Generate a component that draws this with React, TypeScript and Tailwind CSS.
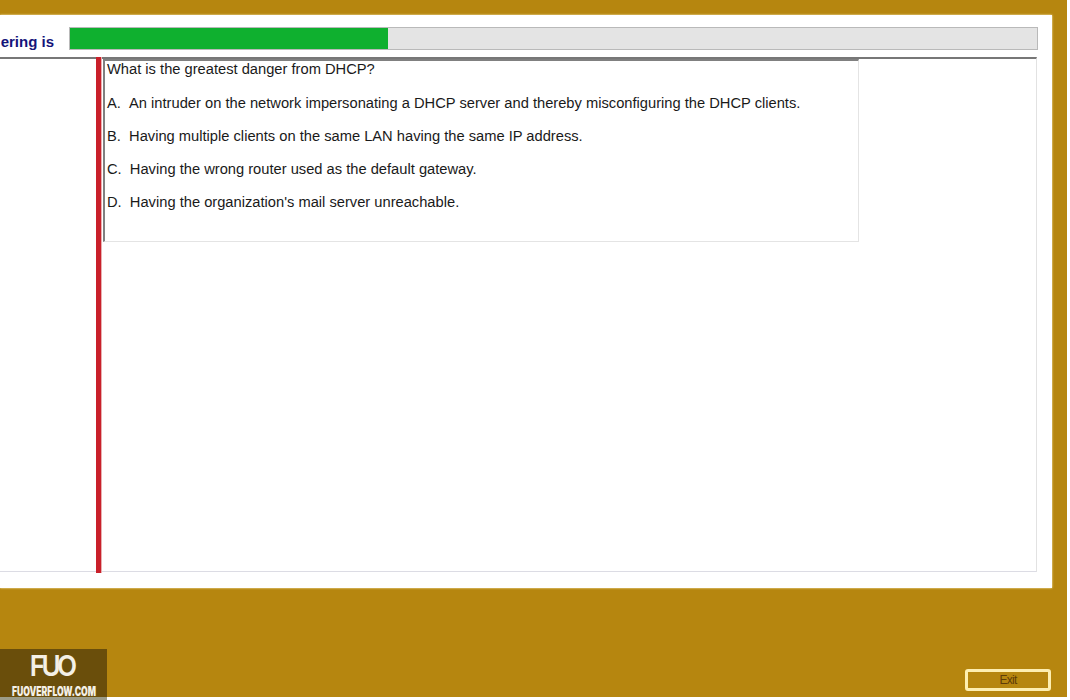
export default function App() {
  const answers = [
    "A.\u00a0\u00a0An intruder on the network impersonating a DHCP server and thereby misconfiguring the DHCP clients.",
    "B.\u00a0\u00a0Having multiple clients on the same LAN having the same IP address.",
    "C.\u00a0\u00a0Having the wrong router used as the default gateway.",
    "D.\u00a0\u00a0Having the organization's mail server unreachable.",
  ];

  return (
    <div className="relative w-[1070px] h-[700px] overflow-hidden bg-white font-['Liberation_Sans',Arial,sans-serif]">
      <div className="w-[1067px] h-[697px] bg-[#b6860f] pt-[15px] flex flex-col">
        {/* main panel */}
        <div className="w-[1052px] h-[573px] bg-white flex flex-col pt-[12px] shadow-[0_0_2px_#fff3c4]">
          <div className="flex h-[23px] shrink-0">
            <div className="w-[69px] pr-[15px] pt-[7px] flex items-center justify-end overflow-hidden whitespace-nowrap">
              <span className="text-[15px] font-bold text-[#14147a]">ering is</span>
            </div>
            <div className="w-[969px] border border-[#b9b9b9] bg-[#e4e4e4]">
              <div className="w-[318px] h-full bg-[#0fb02f]" />
            </div>
          </div>

          <div className="w-[1037px] h-[515px] mt-[7px] border-t-2 border-t-[#777777] border-r border-r-[#e2e2e2] border-b border-b-[#dcdce4] flex shrink-0">
            <div className="w-[96px] shrink-0" />
            <div className="w-[6px] h-[516px] shrink-0 -mt-[2px] bg-[#c9202a] border-r border-r-[#e8b0b0]" />
            <div className="w-[756px] h-[183px] ml-px border-l-2 border-l-[#808080] border-t-2 border-t-[#808080] border-r border-r-[#e4e4e4] border-b border-b-[#e4e4e4] pl-[2px] text-[14.7px] leading-[16px] text-[#1a1a1a]">
              <p className="h-[33px]">What is the greatest danger from DHCP?</p>
              {answers.map((text) => (
                <p key={text} className="h-[33px] pt-[1px]">
                  {text}
                </p>
              ))}
            </div>
          </div>
        </div>

        <div className="flex-1 flex items-end justify-end pr-[16px] pb-[6px]">
          <button className="w-[86px] h-[22px] rounded-[3px] border-[3px] border-[#fdeeb0] text-[12px] leading-none tracking-[-0.7px] text-[#5e3d08] bg-transparent">
            Exit
          </button>
        </div>
      </div>

      {/* watermark */}
      <div className="absolute left-0 top-[649px] w-[107px] h-[51px] flex flex-col">
        <div className="h-[48px] bg-[#6a4e0b] flex flex-col items-center text-[#f4f0e6]">
          <span className="text-[29px] leading-[33px] h-[33px] tracking-[-4px] pr-[4px] font-semibold font-['Inter',sans-serif] scale-x-[0.9]">FUO</span>
          <span className="mt-[2px] text-[12.5px] leading-[15px] font-black font-['Inter',sans-serif] whitespace-nowrap scale-x-[0.69]">FUOVERFLOW.COM</span>
        </div>
        <div className="h-[3px] bg-[#9c9c88]" />
      </div>
    </div>
  );
}
